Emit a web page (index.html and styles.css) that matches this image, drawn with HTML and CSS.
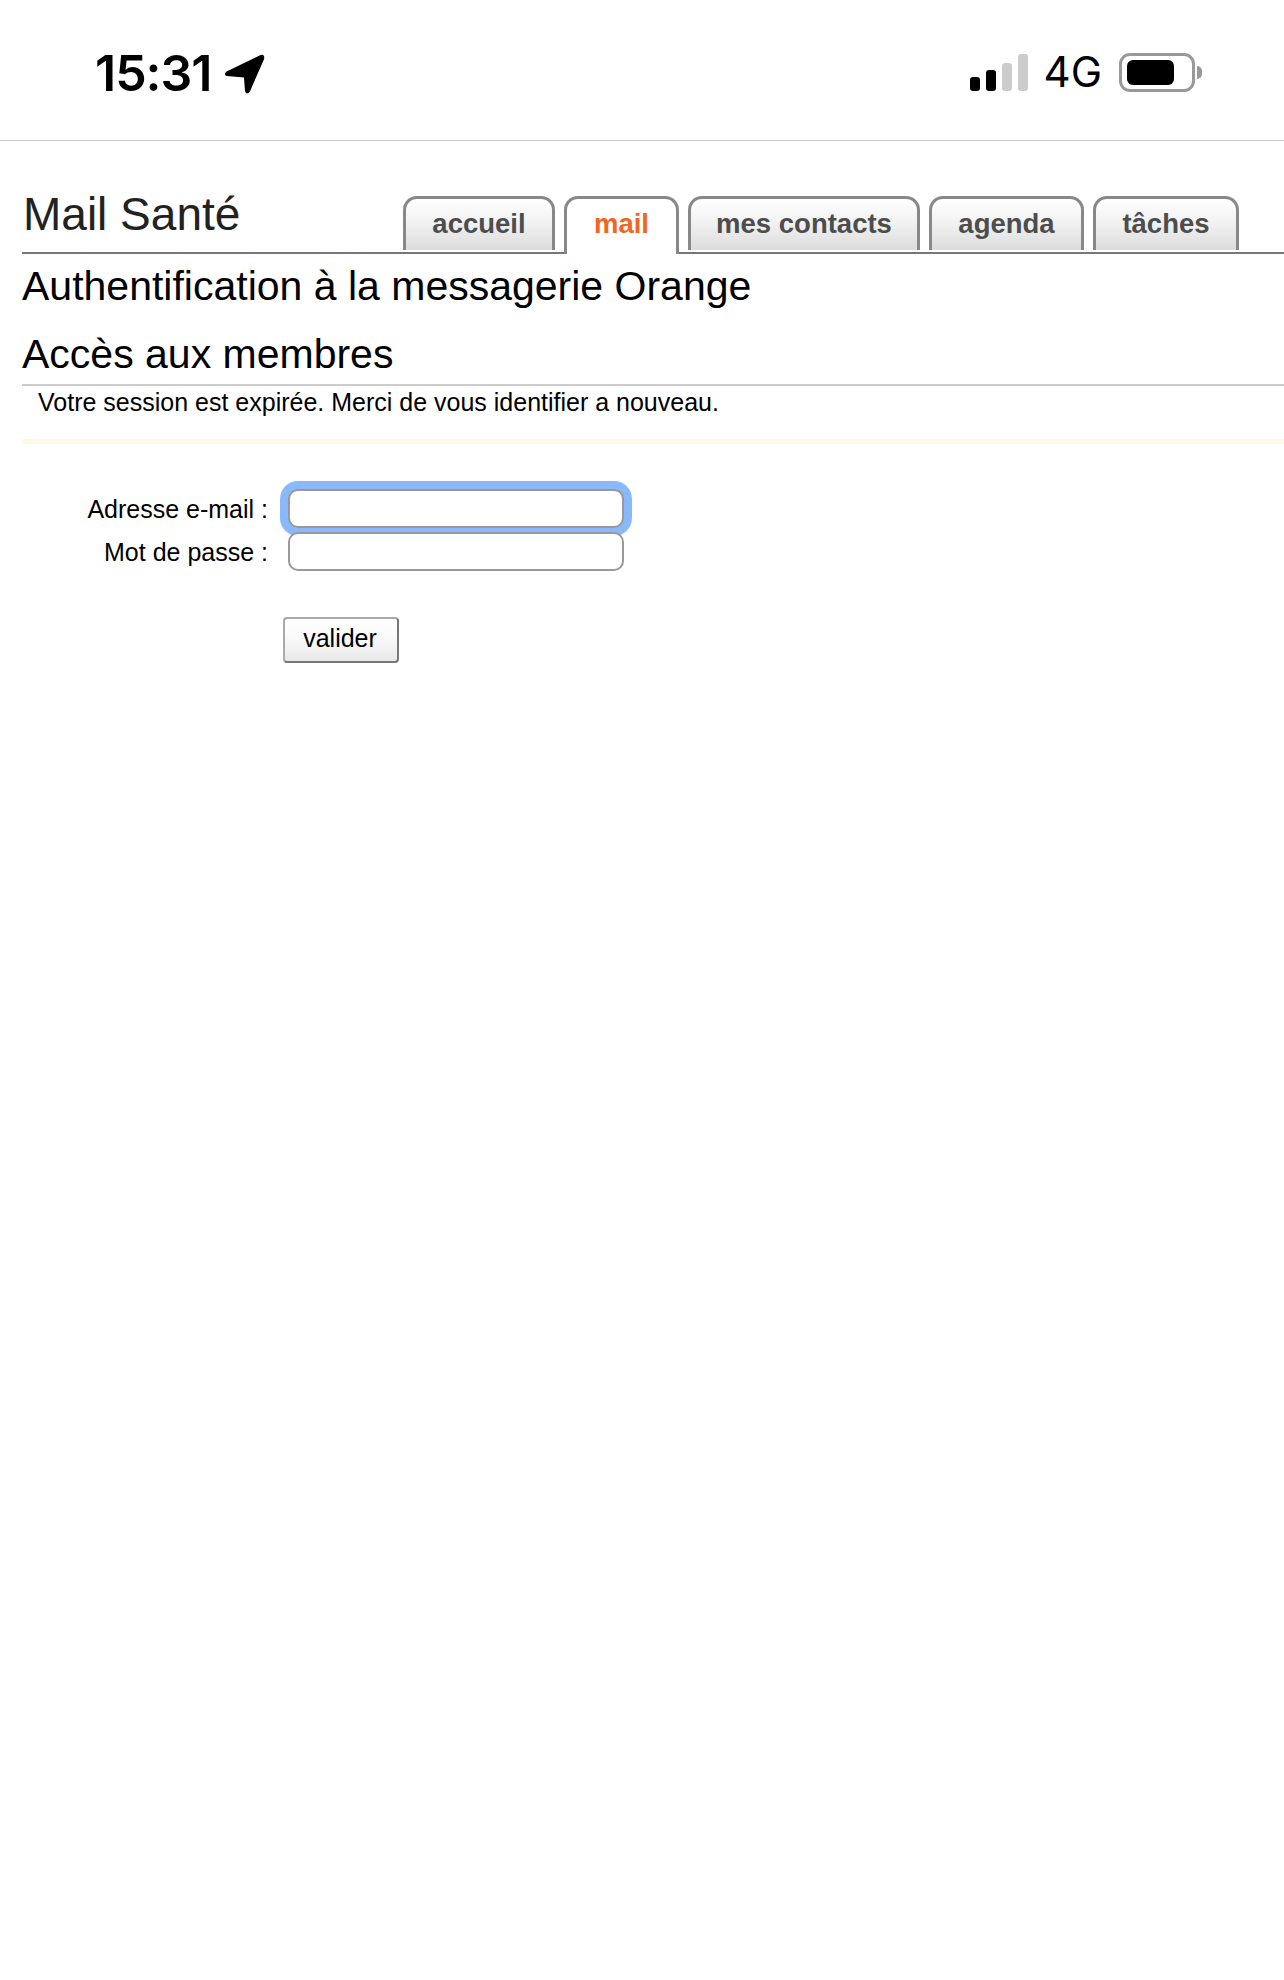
FILE: index.html
```html
<!DOCTYPE html>
<html lang="fr">
<head>
  <meta charset="UTF-8" />
  <title>Mail Santé</title>
  <link rel="stylesheet" href="styles.css">
</head>
<body>

  <div class="status-bar">
    <div class="status-left">
      <span class="clock">15:31</span>
      <svg class="location" width="42" height="42" viewBox="0 0 42 42">
        <path d="M37 3 L3 19.5 Q1 21 3 22 L20 23.5 Q21 23.5 21 25 L22 38 Q23 41 25 38 L39 6 Q40 2 37 3 Z" fill="#000" stroke="#000" stroke-width="2" stroke-linejoin="round"/>
      </svg>
    </div>
    <div class="status-right">
      <div class="signal">
        <span class="bar bar-1"></span>
        <span class="bar bar-2"></span>
        <span class="bar bar-3"></span>
        <span class="bar bar-4"></span>
      </div>
      <span class="network">4G</span>
      <div class="battery"><span class="battery-level"></span></div>
      <span class="battery-cap"></span>
    </div>
  </div>

  <div class="page">
    <div class="top">
      <div class="logo">Mail Santé</div>
      <ul class="tabs">
        <li class="tab tab-accueil">accueil</li>
        <li class="tab tab-mail active">mail</li>
        <li class="tab tab-contacts">mes contacts</li>
        <li class="tab tab-agenda">agenda</li>
        <li class="tab tab-taches">tâches</li>
      </ul>
    </div>

    <h1>Authentification à la messagerie Orange</h1>
    <h2>Accès aux membres</h2>
    <p class="message">Votre session est expirée. Merci de vous identifier a nouveau.</p>

    <form class="login" onsubmit="event.preventDefault();">
      <label for="email">Adresse e-mail :</label>
      <input type="text" id="email" class="focused" />
      <label for="password">Mot de passe :</label>
      <input type="password" id="password" />
      <button type="submit">valider</button>
    </form>
  </div>

</body>
</html>
```

FILE: styles.css
```css
* {
  box-sizing: border-box;
}

body {
  margin: 0;
  background: #fff;
  color: #000;
  font-family: "Liberation Sans", Arial, sans-serif;
}

.status-bar {
  display: flex;
  justify-content: space-between;
  height: 141px;
  padding: 53px 82px 0 95px;
  border-bottom: 1px solid #c8c8c8;
}

.status-left {
  display: flex;
  align-items: flex-start;
}

.clock {
  font-family: Inter, sans-serif;
  font-size: 50px;
  font-weight: 600;
  line-height: 40px;
  letter-spacing: -1px;
}

.location {
  margin-left: 13px;
}

.status-right {
  display: flex;
  align-items: flex-start;
}

.signal {
  display: flex;
  align-items: flex-end;
  gap: 6px;
  height: 38px;
}

.bar {
  width: 10px;
  border-radius: 3px;
  background: #000;
}

.bar-1 { height: 14px; }
.bar-2 { height: 21px; }
.bar-3 { height: 28px; background: #ccc; }
.bar-4 { height: 37px; background: #ccc; }

.network {
  margin-left: 16px;
  font-family: Inter, sans-serif;
  font-size: 42px;
  line-height: 38px;
}

.battery {
  width: 76px;
  height: 39px;
  margin-left: 17px;
  padding: 4px 5px;
  border: 3px solid #999;
  border-radius: 11px;
}

.battery-level {
  display: block;
  width: 47px;
  height: 100%;
  border-radius: 6px;
  background: #000;
}

.battery-cap {
  width: 5px;
  height: 13px;
  margin: 13px 0 0 2px;
  border-radius: 0 5px 5px 0;
  background: #999;
}

.page {
  padding: 0 0 0 22px;
}

.top {
  display: flex;
  align-items: flex-end;
  height: 113px;
  border-bottom: 2px solid #777;
}

.logo {
  width: 381px;
  padding: 0 0 10px 1px;
  font-size: 46px;
  line-height: 56px;
  color: #222;
}

.tabs {
  display: flex;
  gap: 9px;
  margin: 0;
  padding: 0;
  list-style: none;
}

.tab {
  height: 54px;
  margin-bottom: 2px;
  border: 3px solid #888;
  border-bottom: 0;
  border-radius: 14px 14px 0 0;
  background: linear-gradient(#fff, #f2f2f2 45%, #dcdcdc);
  color: #4d4d4d;
  font-size: 27.5px;
  font-weight: bold;
  line-height: 49px;
  text-align: center;
}

.tab-accueil { width: 152px; }
.tab-mail { width: 115px; }
.tab-contacts { width: 232px; }
.tab-agenda { width: 155px; }
.tab-taches { width: 146px; }

.tab.active {
  height: 58px;
  margin-bottom: -2px;
  background: #fff;
  color: #f26522;
}

h1, h2 {
  margin: 0;
  font-size: 41px;
  font-weight: normal;
}

h1 {
  padding-top: 9px;
  line-height: 47px;
}

h2 {
  padding-top: 21px;
  padding-bottom: 6px;
  line-height: 47px;
  border-bottom: 2px solid #ccc;
}

.message {
  margin: 0;
  height: 58px;
  padding: 2px 0 0 16px;
  border-bottom: 5px solid #fff8ea;
  font-size: 25px;
  line-height: 29px;
}

.login {
  display: grid;
  grid-template-columns: 246px 336px;
  align-items: center;
  column-gap: 20px;
  padding-top: 45px;
}

.login label {
  font-size: 25px;
  line-height: 38px;
  text-align: right;
}

.login input {
  width: 336px;
  height: 39px;
  border: 2px solid #999;
  border-radius: 10px;
  background: #fff;
  outline: none;
}

.login input + label {
  margin-top: 4px;
}

.login input#password {
  margin-top: 4px;
}

.login .focused {
  box-shadow: 0 0 0 8px #8ab9fb;
}

.login button {
  grid-column: 2;
  justify-self: start;
  width: 116px;
  height: 46px;
  margin: 46px 0 0 -5px;
  border: 2px solid #aaa;
  border-right-color: #777;
  border-bottom-color: #777;
  border-radius: 4px;
  background: linear-gradient(#fff, #fafafa 45%, #e8e8e8);
  color: #000;
  font-family: "Liberation Sans", Arial, sans-serif;
  font-size: 25px;
  padding: 0 2px 4px 0;
}
```
